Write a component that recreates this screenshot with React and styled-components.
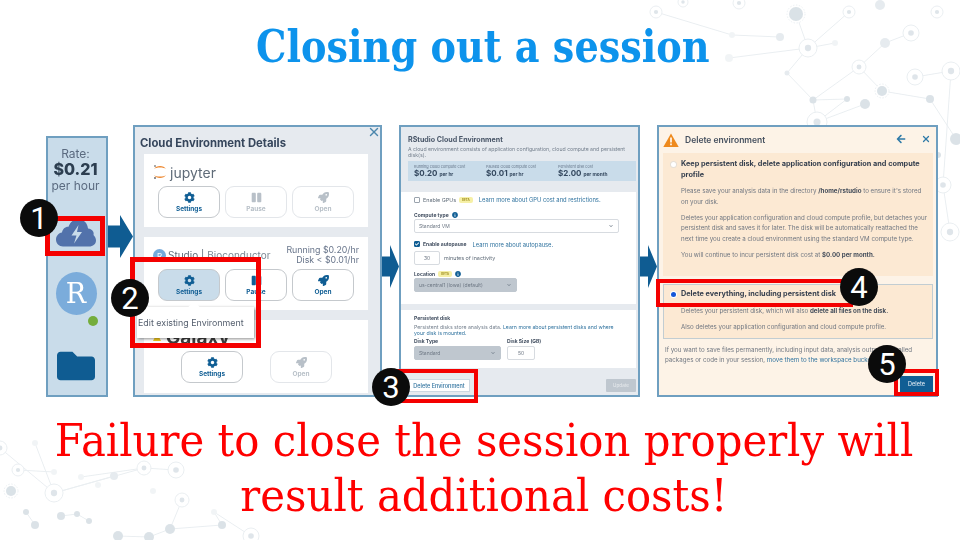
import React from "react";
import styled, { createGlobalStyle } from "styled-components";
import { FaCog, FaPause, FaRocket, FaFolder, FaArrowLeft, FaChevronDown, FaInfoCircle, FaCheck } from "react-icons/fa";
import { X } from "lucide-react";

const Global = createGlobalStyle`
  html, body { margin: 0; padding: 0; background: #fff; }
  #root { width: 960px; height: 540px; overflow: hidden; }
`;
const UI = `"Inter", "Open Sans", sans-serif`;
const Slide = styled.div`
  position: relative; width: 960px; height: 540px; overflow: hidden; background: #fff;
  display: flex; flex-direction: column;
  font-family: ${UI};
`;
const Decor = styled.svg`position: absolute; left: 0; top: 0; width: 960px; height: 540px; opacity: .72;`;
const Title = styled.h1`
  position: relative; margin: 0; height: 125px; padding: 20px 0 0 6px; box-sizing: border-box;
  text-align: center; color: #0d93ec;
  font: 700 45px/54px "DejaVu Serif", serif;
  span { display: inline-block; transform: scaleX(.85); white-space: nowrap; }
`;
const Row = styled.div`position: relative; display: flex; align-items: flex-start; height: 272px; padding-left: 46px;`;
const Panel = styled.section`
  box-sizing: border-box; border: 2px solid #6f9fc0; height: ${p => p.$h || 272}px; width: ${p => p.$w}px;
  margin-top: ${p => p.$top || 0}px; background: ${p => p.$bg || "#e6eaef"}; color: #333f52;
  display: flex; flex-direction: column; position: relative; filter: blur(.6px); overflow: hidden;
`;
const Rail = styled(Panel)`align-items: center; padding-top: 8px; padding-right: 3px;`;
const RateLabel = styled.div`font-size: ${p => p.$big ? 16 : 12}px; font-weight: ${p => p.$big ? 800 : 400}; line-height: ${p => p.$big ? 17 : 15}px; color: ${p => p.$big ? "#2c3e50" : "#5b6b80"};`;
const CloudIcon = styled.svg`width: 40px; height: 29px; margin-top: 25px; flex: none;`;
const Avatar = styled.div`
  position: relative; width: 41px; height: 43px; border-radius: 50%; background: #7bacdb; color: #fff; margin-top: 25px; margin-left: 1px;
  display: flex; align-items: center; justify-content: center; font: 400 27px "DejaVu Serif", serif; flex: none;
  &::after { content: ""; position: absolute; width: 10px; height: 10px; border-radius: 50%; background: #74ad3c; right: -1px; bottom: -11px; }
`;
const Folder = styled(FaFolder)`width: 40px; height: 38px; margin-top: 32px; color: #0f5c92; flex: none;`;
const ArrowBox = styled.svg`flex: none; width: ${p => p.$w}px; height: 43px; margin-top: ${p => p.$top}px;`;

const Details = styled(Panel)`padding: 9px 12px 2px 5px;`;
const DetailsTitle = styled.h2`margin: 0 0 4px 0; font-size: 11.300px; line-height: 14px; font-weight: 700; color: #36465c; white-space: nowrap;`;
const Close = styled(X)`position: absolute; top: -2px; right: -1px; width: 14px; height: 14px; color: #4c87ad;`;
const Card = styled.div`
  box-sizing: border-box; background: #fff; width: 224px; height: 73px; margin-left: 4px; margin-bottom: 10px; flex: none;
  position: relative; padding: 4px 14px 0;
  display: flex; flex-direction: column; &:last-child { margin-bottom: 0; }
`;
const LogoRow = styled.div`height: 28px; flex: none; margin-left: -5px; display: flex; align-items: center; gap: 3px; font-size: 14px; color: #5f6b78; white-space: nowrap;`;
const GalaxyRow = styled(LogoRow)`font-size: 19px; font-weight: 700; color: #3d3d3d; gap: 5px; margin-top: -1px;`;
const Buttons = styled.div`display: flex; gap: 5px; margin-left: ${p => p.$left || 0}px;`;
const Action = styled.div`
  box-sizing: border-box; width: 62px; height: 32px; border-radius: 9px; flex: none;
  border: 1px solid ${p => p.$off ? "#e3e6ea" : "#c5c9cd"}; background: ${p => p.$on ? "#c9dcea" : "#fff"};
  color: ${p => p.$off ? "#b8c0c8" : "#105e94"}; display: flex; flex-direction: column; align-items: center; justify-content: center; gap: 2px;
  font-size: 6.500px; font-weight: 700; margin-right: ${p => p.$mr || 0}px;
  svg { width: 11px; height: 11px; }
`;
const Cost = styled.div`position: absolute; right: 9px; top: 8px; text-align: right; font-size: 8.800px; line-height: 10px; color: #67748a;`;
const Tip = styled.div`
  position: absolute; left: 2px; top: 180px; width: 117px; height: 31px; background: #fff; box-shadow: 1px 1px 3px rgba(0,0,0,.45);
  font-size: 8.900px; color: #555f6e; display: flex; align-items: center; padding-left: 1px; box-sizing: border-box; white-space: nowrap; z-index: 2;
  &::before { content: ""; position: absolute; top: -4px; left: 53px; width: 8px; height: 8px; background: #fff; transform: rotate(45deg); }
`;

const EnvHead = styled.div`padding: 8px 1px 0 7px; height: 65px; box-sizing: border-box; flex: none;`;
const EnvTitle = styled.div`font-size: 7.100px; font-weight: 700; line-height: 9px; color: #4a5769; white-space: nowrap;`;
const EnvSub = styled.div`font-size: 5.200px; line-height: 6px; color: #75808e; margin-top: 2px;`;
const CostStrip = styled.div`display: flex; background: #c9dcea; height: 20px; width: 228px; box-sizing: border-box; padding: 2px 6px; margin-top: 3px; align-items: center; gap: 10px;`;
const CostCol = styled.div`width: 62px; flex: none; font-size: 3.800px; color: #66768a; white-space: nowrap; b { display: block; font-size: 8px; line-height: 9px; color: #33475e; } small { font-size: 4.800px; font-weight: 700; }`;
const Sheet = styled.div`background: #fff; box-sizing: border-box; padding: ${p => p.$pad}; height: ${p => p.$h}px; margin-bottom: ${p => p.$mb || 0}px; width: 235px; flex: none;`;
const FormLine = styled.div`display: flex; align-items: center; gap: ${p => p.$gap || 3}px; font-size: 5.400px; color: #5f6b78; height: ${p => p.$h || 9}px; margin-top: ${p => p.$mt || 0}px; white-space: nowrap; b { color: #3f4c5e; font-size: 5px; }`;
const Lnk = styled.span`color: #30739f;`;
const FormLnk = styled(Lnk)`font-size: 5.800px; margin-left: 3px;`;
const Check = styled.span`box-sizing: border-box; width: 6px; height: 6px; border: 1px solid ${p => p.$on ? "#105e94" : "#9aa3ad"}; background: ${p => p.$on ? "#105e94" : "#fff"}; border-radius: 1px; flex: none; display: inline-flex; color: #fff; svg { width: 4px; height: 4px; }`;
const Beta = styled.span`background: #f6f0a6; color: #a08f20; font-size: 3px; padding: 1px 3px; border-radius: 2px; font-weight: 700;`;
const Info = styled(FaInfoCircle)`width: 6px; height: 6px; color: #105e94;`;
const Select = styled.div`box-sizing: border-box; width: ${p => p.$w}px; height: ${p => p.$ht || 14}px; border-radius: 2px; border: 1px solid ${p => p.$off ? "#bfc7cf" : "#d7dbe0"}; background: ${p => p.$off ? "#bfc7cf" : "#fff"}; color: #6c7683; font-size: 5px; font-weight: 400; display: flex; align-items: center; justify-content: space-between; padding: 0 5px 0 4px; flex: none; svg { width: 4px; height: 4px; color: #7a8591; }`;
const Spin = styled.div`box-sizing: border-box; width: ${p => p.$w || 26}px; height: 14px; border: 1px solid #d7dbe0; border-radius: 2px; font-size: 5px; font-weight: 400; color: #6c7683; display: flex; align-items: center; justify-content: center; flex: none;`;
const DiskGrid = styled.div`display: grid; grid-template-columns: 93px auto; font-size: 5px; font-weight: 700; color: #3f4c5e; line-height: 7px; margin-top: 2px;`;
const DiskCell = styled.div`display: flex; flex-direction: column; gap: 1px;`;
const DiskText = styled(EnvSub)`margin-top: 2px; width: 212px;`;
const EnvFoot = styled.div`flex: 1; display: flex; justify-content: space-between; align-items: flex-end; padding: 0 2px 3px 7px;`;
const GhostBtn = styled.div`width: 62px; height: 13px; background: #fff; border: 1px solid #cdd8e2; box-sizing: border-box; color: #30739f; font-size: 5.500px; font-weight: 500; display: flex; align-items: center; justify-content: center; white-space: nowrap;`;
const DimBtn = styled.div`width: 30px; height: 13px; background: #bfc7cf; color: #e8ebee; font-size: 4.600px; display: flex; align-items: center; justify-content: center; border-radius: 1px;`;

const Del = styled(Panel)`padding: 0 4px 0 4px;`;
const DelHead = styled.div`display: flex; align-items: center; height: 24px; flex: none; font-size: 8.500px; font-weight: 600; color: #45505f; gap: 6px; margin-top: 1px;`;
const DelNav = styled.div`margin-left: auto; display: flex; gap: 15px; color: #2e7aa8; margin-right: 1px; margin-top: -3px; svg { width: 10px; height: 10px; }`;
const Option = styled.div`
  box-sizing: border-box; flex: none; width: ${p => p.$w}px; height: ${p => p.$h}px; margin-top: ${p => p.$mt}px; background: #fce9d3;
  border: ${p => p.$on ? "1px solid #c2cdd2" : "none"}; padding: ${p => p.$on ? "4px 3px 0 7px" : "6px 4px 0 8px"};
`;
const OptHead = styled.div`display: flex; gap: 5px; font-size: 7.300px; font-weight: 700; line-height: 10.700px; color: #36404f; align-items: flex-start;`;
const Radio = styled.span`width: 5px; height: 5px; border-radius: 50%; margin-top: 3px; flex: none; background: ${p => p.$on ? "#1657d8" : "#fff"}; box-shadow: 0 0 0 1px ${p => p.$on ? "#fff" : "#e6dfd6"};`;
const OptText = styled.p`margin: ${p => p.$mt}px 0 0 10px; font-size: 6.200px; line-height: 10.300px; color: #6f7680; b { color: #444d5a; }`;
const DelNote = styled.p`margin: 6px 0 0 2px; font-size: 6.200px; line-height: 10.300px; color: #6f7680; width: 268px;`;
const DangerBtn = styled.div`position: absolute; right: 3px; bottom: 3px; width: 33px; height: 16px; background: #105e94; color: #dfe9f1; font-size: 5.500px; display: flex; align-items: center; justify-content: center; font-weight: 500;`;

const RedBox = styled.div`position: absolute; left: ${p => p.$x}px; top: ${p => p.$y}px; width: ${p => p.$w}px; height: ${p => p.$h}px; box-sizing: border-box; border: ${p => p.$b || 4}px solid #f40000; pointer-events: none;`;
const Badge = styled.div`position: absolute; left: ${p => p.$x - 19}px; top: ${p => p.$y - 19}px; width: 38px; height: 38px; border-radius: 50%; background: #0b0b0b; color: #fff; display: flex; align-items: center; justify-content: center; font: 400 31px "Roboto", sans-serif;`;
const Warning = styled.p`
  position: relative; margin: 16px 0 0; padding-left: 8px; text-align: center; color: #ff0000; font: 400 44px/55px "DejaVu Serif", serif; height: 110px; flex: none;
  span { display: block; transform: scaleX(.95); white-space: nowrap; }
`;

const nodesRaw = [
  [656,12,6,1],[683,2,5,1],[739,3,6,1],[796,14,7,2],[849,12,6,1],[880,5,5,3],[937,12,6,1],[732,35,3,4],[780,37,4,3],[808,48,9,1],[835,43,3,4],[911,33,8,1],[885,43,5,3],[729,58,4,4],[787,73,2.500,3],[859,67,7,1],[915,77,8,1],[951,71,9,1],[882,91,5,2],[813,100,3.500,5],[847,99,3,5],[865,104,5,5],[930,99,4,5],[817,122,10,1],[956,139,6,5],[943,185,8,1],[950,232,9,1],[938,155,3,5],
  [0,448,7,1],[18,470,6,1],[11,491,5,2],[35,443,3,4],[54,472,3,4],[54,493,9,1],[81,477,3,4],[114,476,4,3],[144,468,7,1],[176,470,8,1],[98,485,3,4],[153,491,3,4],[182,500,7,1],[26,512,3,5],[35,525,4,5],[61,516,4,5],[77,514,3,5],[89,521,3,5],[118,536,5,5],[149,537,5,5],[170,529,5,5],[222,525,4,5],[214,512,3,4],[251,536,8,1],
];
const links = [[0,7],[7,8],[3,9],[4,9],[9,13],[9,14],[10,9],[11,12],[12,15],[15,18],[18,22],[16,17],[15,19],[14,19],[19,20],[20,23],[19,23],[21,23],[22,24],[17,25],[25,26],[28,33],[31,33],[33,36],[34,36],[35,33],[37,36],[40,48],[46,47],[47,48],[48,49],[49,50],[50,51],[41,42],[43,44],[44,45],[32,29]];

function Network() {
  return (
    <Decor viewBox="0 0 960 540" aria-hidden="true">
      {links.map(([a, b], i) => (
        <line key={i} x1={nodesRaw[a][0]} y1={nodesRaw[a][1]} x2={nodesRaw[b][0]} y2={nodesRaw[b][1]} stroke="#e2e8ec" strokeWidth="1" />
      ))}
      {nodesRaw.map(([x, y, r, k], i) => {
        if (k === 1) return <g key={i}><circle cx={x} cy={y} r={r} fill="#fff" stroke="#e2e8ec" /><circle cx={x} cy={y} r={r * 0.35} fill="#d3dce2" /></g>;
        if (k === 2) return <g key={i}><circle cx={x} cy={y} r={r + 2} fill="#fff" stroke="#e2e8ec" strokeDasharray="1.500 1.500" /><circle cx={x} cy={y} r={r} fill="#cdd7de" /></g>;
        const fill = k === 3 ? "#dde4e9" : k === 4 ? "#edf1f3" : "#ced8df";
        return <circle key={i} cx={x} cy={y} r={r} fill={fill} />;
      })}
    </Decor>
  );
}

const BlockArrow = ({ w, top, shaft }) => {
  const head = w > 20 ? 13 : 9;
  return (
    <ArrowBox $w={w} $top={top} viewBox={`0 0 ${w} 43`}>
      <path d={`M0 ${21.5 - shaft} H${w - head} V0 L${w} 21.500 L${w - head} 43 V${21.5 + shaft} H0 Z`} fill="#0f5c92" />
    </ArrowBox>
  );
};

const ActionSet = ({ off, on, openOff }) => (
  <>
    <Action $on={on}><FaCog />Settings</Action>
    <Action $off={off}><FaPause />Pause</Action>
    <Action $off={openOff}><FaRocket />Open</Action>
  </>
);

export default function App() {
  return (
    <Slide>
      <Global />
      <Network />
      <Title><span>Closing out a session</span></Title>
      <Row>
        <Rail $w={62} $h={261} $top={11} $bg="#c9dcea">
          <RateLabel>Rate:</RateLabel>
          <RateLabel $big>$0.21</RateLabel>
          <RateLabel>per hour</RateLabel>
          <CloudIcon viewBox="0 0 40 29">
            <path d="M7 28.500C3 28.500 0 25.500 0 21.500 0 18 2.500 15 6 14.500 6.500 11 9.500 8.500 12.500 8.800 14.500 3.500 18 1 22 1c5.500 0 9.500 4 10 9.500C36 11 38.500 14 37.500 17 39 18.500 40 20.500 40 22.500 40 26 37 28.500 33 28.500Z" fill="#5272ab" />
            <path d="M22.500 7 15.500 17.500h5L18 25.500 26 14h-5Z" fill="#c9dcea" />
          </CloudIcon>
          <Avatar>R</Avatar>
          <Folder />
        </Rail>
        <BlockArrow w={25} top={90} shaft={11} />
        <Details $w={249}>
          <Close strokeWidth={2.5} />
          <DetailsTitle>Cloud Environment Details</DetailsTitle>
          <Card>
            <LogoRow>
              <svg width="14" height="16" viewBox="0 0 14 16"><path d="M1 5C3 1 11 1 13 5 11 3 3 3 1 5ZM1 11C3 15 11 15 13 11 11 13 3 13 1 11Z" fill="#ee8a33" /><circle cx="2" cy="2" r="1" fill="#8c8c8c" /><circle cx="2" cy="14" r="1" fill="#6c6c6c" /></svg>
              <span>jupyter</span>
            </LogoRow>
            <Buttons><ActionSet off openOff /></Buttons>
          </Card>
          <Card>
            <LogoRow>
              <svg width="13" height="13" viewBox="0 0 13 13"><circle cx="6.500" cy="6.500" r="6.500" fill="#75aadb" /><text x="6.500" y="9.500" fontSize="8" fill="#fff" textAnchor="middle" fontFamily="Inter">R</text></svg>
              <span style={{ fontSize: 10, marginLeft: -1 }}>Studio |</span>
              <span style={{ fontSize: 10, color: "#7b8894" }}>Bioconductor</span>
            </LogoRow>
            <Cost>Running $0.20/hr<br />Disk &lt; $0.01/hr</Cost>
            <Buttons><ActionSet on /></Buttons>
          </Card>
          <Card>
            <GalaxyRow>
              <svg width="8" height="8" viewBox="0 0 8 8"><path d="M0 8 4 0l4 8Z" fill="#f2c81e" /></svg>
              <span>Galaxy</span>
            </GalaxyRow>
            <Buttons $left={23}>
              <Action $mr={22}><FaCog />Settings</Action>
              <Action $off><FaRocket />Open</Action>
            </Buttons>
          </Card>
          <Tip>Edit existing Environment</Tip>
        </Details>
        <BlockArrow w={17} top={120} shaft={10} />
        <Panel $w={241}>
          <EnvHead>
            <EnvTitle>RStudio Cloud Environment</EnvTitle>
            <EnvSub>A cloud environment consists of application configuration, cloud compute and persistent disk(s).</EnvSub>
            <CostStrip>
              <CostCol>Running cloud compute cost<b>$0.20 <small>per hr</small></b></CostCol>
              <CostCol>Paused cloud compute cost<b>$0.01 <small>per hr</small></b></CostCol>
              <CostCol>Persistent disk cost<b>$2.00 <small>per month</small></b></CostCol>
            </CostStrip>
          </EnvHead>
          <Sheet $h={112} $mb={6} $pad="2px 8px 0 13px">
            <FormLine $h={11}><Check />Enable GPUs <Beta>BETA</Beta><FormLnk>Learn more about GPU cost and restrictions.</FormLnk></FormLine>
            <FormLine $mt={5}><b>Compute type</b> <Info /></FormLine>
            <Select $w={205}>Standard VM <FaChevronDown /></Select>
            <FormLine $h={10} $mt={6}><Check $on><FaCheck /></Check><b>Enable autopause</b><FormLnk>Learn more about autopause.</FormLnk></FormLine>
            <FormLine $h={14} $mt={2} $gap={4}><Spin>30</Spin>minutes of inactivity</FormLine>
            <FormLine $mt={4}><b>Location</b> <Beta>BETA</Beta> <Info /></FormLine>
            <Select $w={103} $off>us-central1 (Iowa) (default) <FaChevronDown /></Select>
          </Sheet>
          <Sheet $h={58} $pad="4px 8px 0 13px">
            <FormLine $h={8}><b>Persistent disk</b></FormLine>
            <DiskText>Persistent disks store analysis data. <Lnk>Learn more about persistent disks and where your disk is mounted.</Lnk></DiskText>
            <DiskGrid>
              <DiskCell>Disk Type<Select $w={87} $off>Standard <FaChevronDown /></Select></DiskCell>
              <DiskCell>Disk Size (GB)<Spin $w={28}>50</Spin></DiskCell>
            </DiskGrid>
          </Sheet>
          <EnvFoot>
            <GhostBtn>Delete Environment</GhostBtn>
            <DimBtn>Update</DimBtn>
          </EnvFoot>
        </Panel>
        <BlockArrow w={17} top={120} shaft={10} />
        <Del $w={281} $bg="#fdf3e7">
          <DelHead>
            <svg width="16" height="14" viewBox="0 0 16 14"><path d="M8 0.500 15.700 14H.300Z" fill="#ee8a1e" /><path d="M7.200 4.500h1.600v5H7.200zM7.200 10.500h1.600v1.800H7.200z" fill="#fff" /></svg>
            Delete environment
            <DelNav><FaArrowLeft /><X strokeWidth={3} /></DelNav>
          </DelHead>
          <Option $w={270} $h={123} $mt={1}>
            <OptHead><Radio />Keep persistent disk, delete application configuration and compute profile</OptHead>
            <OptText $mt={6}>Please save your analysis data in the directory <b>/home/rstudio</b> to ensure it's stored on your disk.</OptText>
            <OptText $mt={6}>Deletes your application configuration and cloud compute profile, but detaches your persistent disk and saves it for later. The disk will be automatically reattached the next time you create a cloud environment using the standard VM compute type.</OptText>
            <OptText $mt={6}>You will continue to incur persistent disk cost at <b>$0.00 per month.</b></OptText>
          </Option>
          <Option $w={270} $h={55} $mt={8} $on>
            <OptHead><Radio $on />Delete everything, including persistent disk</OptHead>
            <OptText $mt={6}>Deletes your persistent disk, which will also <b>delete all files on the disk.</b></OptText>
            <OptText $mt={6}>Also deletes your application configuration and cloud compute profile.</OptText>
          </Option>
          <DelNote>If you want to save files permanently, including input data, analysis outputs, installed packages or code in your session, <Lnk>move them to the workspace bucket.</Lnk></DelNote>
          <DangerBtn>Delete</DangerBtn>
        </Del>
      </Row>
      <Warning><span>Failure to close the session properly will</span><span>result additional costs!</span></Warning>
      <RedBox $x={45} $y={216} $w={60} $h={40} $b={5} />
      <RedBox $x={130} $y={257} $w={131} $h={91} $b={5} />
      <RedBox $x={397} $y={369} $w={81} $h={34} />
      <RedBox $x={656} $y={279} $w={197} $h={28} />
      <RedBox $x={894} $y={369} $w={45} $h={27} />
      <Badge $x={39} $y={218}>1</Badge>
      <Badge $x={130} $y={298}>2</Badge>
      <Badge $x={391} $y={387}>3</Badge>
      <Badge $x={859} $y={287}>4</Badge>
      <Badge $x={887} $y={364}>5</Badge>
    </Slide>
  );
}
